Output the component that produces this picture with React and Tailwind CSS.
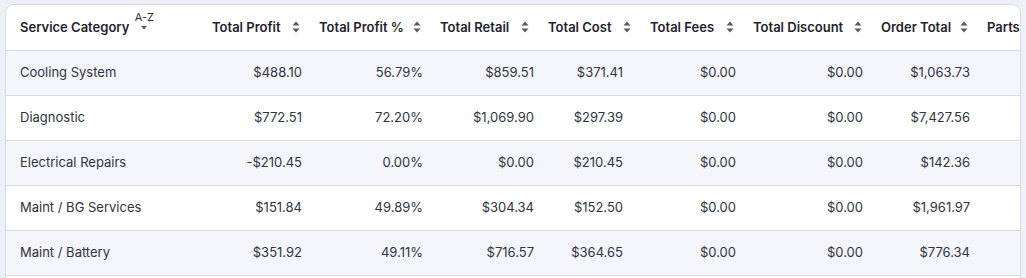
import React from "react";

const cols = [
  { label: "Total Profit", w: "w-[107px]", vpr: "pr-[7px]" },
  { label: "Total Profit %", w: "w-[121px]", vpr: "pr-[7px]" },
  { label: "Total Retail", w: "w-[108px]", vpr: "pr-[4px]" },
  { label: "Total Cost", w: "w-[102px]", vpr: "pr-[17px]" },
  { label: "Total Fees", w: "w-[103px]", vpr: "pr-[7px]" },
  { label: "Total Discount", w: "w-[128px]", vpr: "pr-[8px]" },
  { label: "Order Total", w: "w-[106px]", vpr: "pr-[7px]" },
];

const rows = [
  ["Cooling System", "$488.10", "56.79%", "$859.51", "$371.41", "$0.00", "$0.00", "$1,063.73"],
  ["Diagnostic", "$772.51", "72.20%", "$1,069.90", "$297.39", "$0.00", "$0.00", "$7,427.56"],
  ["Electrical Repairs", "-$210.45", "0.00%", "$0.00", "$210.45", "$0.00", "$0.00", "$142.36"],
  ["Maint / BG Services", "$151.84", "49.89%", "$304.34", "$152.50", "$0.00", "$0.00", "$1,961.97"],
  ["Maint / Battery", "$351.92", "49.11%", "$716.57", "$364.65", "$0.00", "$0.00", "$776.34"],
];

function SortIcon() {
  return (
    <svg width="8" height="12" viewBox="0 0 8 12" className="shrink-0">
      <path d="M4 0.5 L7.5 4.5 L0.5 4.5 Z" fill="#555a67" />
      <path d="M4 11.5 L7.5 7.5 L0.5 7.5 Z" fill="#555a67" />
    </svg>
  );
}

function AzIcon() {
  return (
    <span className="ml-[5px] inline-flex w-[20px] flex-col items-center self-start mt-[-6px]">
      <span className="text-[11px] leading-[11px] font-normal text-[#2a2e38]">A-Z</span>
      <svg width="6" height="4" viewBox="0 0 6 4" className="mt-[3px]">
        <path d="M0 0 L6 0 L3 3.5 Z" fill="#555a67" />
      </svg>
    </span>
  );
}

export default function App() {
  return (
    <div
      className="h-[278px] w-[1026px] overflow-hidden bg-[#eef0f8] pt-[4px] px-[5px]"
      style={{ fontFamily: "Inter, 'Noto Sans', sans-serif" }}
    >
      <div className="h-[300px] overflow-hidden rounded-t-[9px] border border-[#d9dce8] bg-white">
        <table className="table-fixed border-collapse w-[1121px]">
          <colgroup>
            <col className="w-[196px]" />
            {cols.map((c) => (
              <col key={c.label} className={c.w} />
            ))}
            <col className="w-[150px]" />
          </colgroup>
          <thead>
            <tr className="h-[45px] border-b border-[#d9dce8]">
              <th className="pl-[14px] text-left text-[13px] font-semibold text-[#1f232d] whitespace-nowrap">
                <span className="inline-flex items-center">
                  Service Category
                  <AzIcon />
                </span>
              </th>
              {cols.map((c) => (
                <th key={c.label} className="pl-[10px] pr-[9px] text-[13px] font-semibold text-[#1f232d] whitespace-nowrap">
                  <div className="flex items-center justify-between">
                    <span>{c.label}</span>
                    <SortIcon />
                  </div>
                </th>
              ))}
              <th className="pl-[10px] text-left text-[13px] font-semibold text-[#1f232d] whitespace-nowrap">Parts</th>
            </tr>
          </thead>
          <tbody>
            {rows.map((r, i) => (
              <tr
                key={r[0]}
                className={`h-[45px] border-b border-[#d9dce8] ${i % 2 === 0 ? "bg-[#f5f6fb]" : "bg-white"}`}
              >
                <td className="pl-[14px] text-left text-[13px] text-[#30343e] whitespace-nowrap">{r[0]}</td>
                {cols.map((c, j) => (
                  <td key={c.label} className={`${c.vpr} text-right text-[13px] text-[#30343e] whitespace-nowrap`}>
                    {r[j + 1]}
                  </td>
                ))}
                <td></td>
              </tr>
            ))}
          </tbody>
        </table>
      </div>
    </div>
  );
}
